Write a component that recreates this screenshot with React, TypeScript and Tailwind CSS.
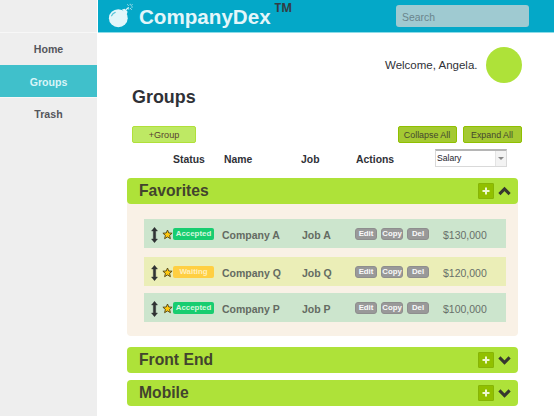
import React from 'react';

const headingText = 'text-[#2f3137] font-bold';

function Bomb() {
  return (
    <svg className="h-7 w-7 shrink-0" viewBox="0 0 28 28" fill="none">
      <ellipse cx="12.3" cy="16.2" rx="9.4" ry="9" fill="#e3f6fa" />
      <path d="M16 7.6l2.6-.8 3 3-1 3z" fill="#e3f6fa" />
      <path d="M19.8 8.4c.6-1.7 1.8-1.9 3-3" stroke="#e3f6fa" strokeWidth="1.3" />
      <path d="M5.6 13.8c.6-1.7 1.7-2.8 3.6-3.4" stroke="#5cc6da" strokeWidth="1.2" strokeLinecap="round" />
      <path d="M21.2 2.4l1.5 1.3M24.2 1.8v1.4M26.5 2.2l-1.5 1.6M25.2 5h1.6M24 6l1.7 1.8M22.7 6.2v1.5" stroke="#a5dfeb" strokeWidth="1" />
    </svg>
  );
}

function Chevron({ up = false }: { up?: boolean }) {
  return (
    <svg className="h-[10px] w-[13px]" viewBox="0 0 13 10" fill="none">
      <path d={up ? 'M1.4 8.1L6.5 3l5.1 5.1' : 'M1.4 2.4l5.1 5.1 5.1-5.1'} stroke="#36372f" strokeWidth="3.1" />
    </svg>
  );
}

function GroupBar({ title, open = false }: { title: string; open?: boolean }) {
  return (
    <div className="flex h-[26px] items-center rounded-[4px] bg-[#aee239] pl-3 pr-[7.5px]">
      <h2 className="flex-1 text-[15.7px] leading-[24px] font-bold text-[#42442e]">{title}</h2>
      <button className="mr-1 flex h-4 w-4 items-center justify-center rounded-[1px] border border-[#87b506] bg-[#91c000]">
        <svg className="h-2 w-2" viewBox="0 0 8 8">
          <path d="M4 .5v7M.5 4h7" stroke="#edf8d0" strokeWidth="2" />
        </svg>
      </button>
      <Chevron up={open} />
    </div>
  );
}

function Row({ status, name, job, salary }: { status: string; name: string; job: string; salary: string }) {
  const waiting = status === 'Waiting';
  return (
    <div className={`flex h-[29px] items-center ${waiting ? 'bg-[#ebeeb7]' : 'bg-[#cce5cd]'}`}>
      <svg className="mt-[2px] ml-[7px] h-4 w-[7px] shrink-0" viewBox="0 0 7 16">
        <path d="M3.5 .3L6.5 4H4.7v8h1.8l-3 3.7L.5 12h1.8V4H.5z" fill="#303334" stroke="#303334" strokeWidth=".4" strokeLinejoin="round" />
      </svg>
      <svg className="mt-[2px] ml-1 h-[11px] w-[11px] shrink-0" viewBox="0 0 11 11">
        <path d="M5.5 1l1.3 3 3.3.2-2.5 2.2.8 3.3-2.9-1.8-2.9 1.8.8-3.3L.9 4.2 4.2 4z" fill="#ffc90d" stroke="#4f4213" strokeWidth=".9" />
      </svg>
      <span className={`mt-px flex h-3 w-[41px] shrink-0 items-center justify-center rounded-[2px] text-[7.9px] leading-3 font-bold ${waiting ? 'bg-[#ffcf42] text-[#fff0bc]' : 'bg-[#18cd70] text-[#d5f7df]'}`}>
        {status}
      </span>
      <span className="mt-[2px] ml-2 w-20 text-[10.5px] leading-[14px] font-bold text-[#646b62]">{name}</span>
      <span className="mt-[2px] w-[53px] text-[10.5px] leading-[14px] font-bold text-[#646b62]">{job}</span>
      <span className="mt-px flex w-[88px] gap-1">
        {['Edit', 'Copy', 'Del'].map((action) => (
          <button key={action} className="h-3 w-[22px] rounded-[3px] border border-[#8e8e8e] bg-[#999999] text-center text-[7.8px] leading-[10px] font-bold text-[#fafafa]">
            {action}
          </button>
        ))}
      </span>
      <span className="mt-[2px] text-[10.5px] leading-[14px] text-[#68706a]">{salary}</span>
    </div>
  );
}

export default function App() {
  return (
    <div className="flex h-[416px] w-[554px] overflow-hidden bg-white font-['Liberation_Sans',Arial,sans-serif]">
      <aside className="w-[97px] shrink-0 bg-[#eeeeee] text-center text-[10.6px] font-bold text-[#55565c]">
        <div className="h-[33px] border-b border-[#f7f7f7]" />
        <nav>
          <a className="block h-8 leading-[33px]">Home</a>
          <a className="block h-8 bg-[#40c0cb] leading-[35px] text-[#d9f5f8]">Groups</a>
          <a className="block h-8 border-t border-[#f7f7f7] leading-[33px]">Trash</a>
        </nav>
      </aside>
      <div className="flex w-[457px] flex-col pl-px">
        <header className="flex h-[33px] shrink-0 items-center border-b border-[#8ddce8] bg-[#04a8c8] pl-2 pr-[25px]">
          <Bomb />
          <div className="ml-[5px] flex flex-1 items-start">
            <h1 className="text-[20.6px] leading-[35px] font-bold text-[#e3f6fa]">CompanyDex</h1>
            <span className="ml-[4px] font-['Open_Sans',sans-serif] text-[11.5px] leading-[18px] font-bold text-[#343b43]">TM</span>
          </div>
          <input
            className="h-[22px] w-[133px] rounded-[3px] bg-[#9fcad1] px-1.5 pt-[2px] text-[10.4px] text-[#6a858c] placeholder:text-[#6a858c]"
            placeholder="Search"
          />
        </header>
        <main className="pl-[29px] pr-9">
          <div className="mt-[14px] flex h-9 items-center justify-end">
            <span className="text-[11.5px] leading-[14px] text-[#2f3137]">Welcome, Angela.</span>
            <span className="-mr-[3.5px] ml-2 h-9 w-9 rounded-full bg-[#aee239]" />
          </div>
          <h2 className={`${headingText} mt-1 ml-[5px] text-[17.9px] leading-[20px]`}>Groups</h2>
          <div className="mt-[19px] ml-[5px] flex h-[17px] items-center text-[9.1px] text-[#45472f]">
            <button className="h-[17px] w-16 rounded-[2px] border border-[#b0e039] bg-[#bee964] pt-px leading-[15px] text-[#593f30]">+Group</button>
            <button className="ml-auto h-[17px] w-[59px] rounded-[2px] border border-[#8fc000] bg-[#a4c932] pt-px text-[8.9px] leading-[15px]">Collapse All</button>
            <button className="-mr-[3.5px] ml-[6px] h-[17px] w-[59px] rounded-[2px] border border-[#8fc000] bg-[#a4c932] pt-px text-[8.9px] leading-[15px]">Expand All</button>
          </div>
          <div className={`${headingText} mt-[6px] flex h-[18px] items-center pl-[46px] text-[10.4px]`}>
            <span className="mt-[4px] w-[51px]">Status</span>
            <span className="mt-[4px] w-[77px]">Name</span>
            <span className="mt-[4px] w-[55px]">Job</span>
            <span className="mt-[4px] w-[79px]">Actions</span>
            <span className="flex h-[18px] w-[72px] items-center border border-[#d9d9d9] border-t-2 border-t-[#b5b5b5] bg-white pl-px text-[8.6px] font-normal text-[#25252d]">
              <span className="flex-1">Salary</span>
              <span className="flex h-[15px] w-[11px] items-center justify-center border-l border-[#e4e4e4] bg-[#f3f3f3]">
                <span className="border-x-[3px] border-t-[3px] border-x-transparent border-t-[#888888]" />
              </span>
            </span>
          </div>
          <section className="mt-[11px] h-[158px] rounded-[4px] bg-[#f9f1e6]">
            <GroupBar title="Favorites" open />
            <div className="mt-[15px] ml-[17px] w-[362px]">
              <Row status="Accepted" name="Company A" job="Job A" salary="$130,000" />
              <div className="h-[9px]" />
              <Row status="Waiting" name="Company Q" job="Job Q" salary="$120,000" />
              <div className="h-[7px]" />
              <Row status="Accepted" name="Company P" job="Job P" salary="$100,000" />
            </div>
          </section>
          <section className="mt-[11px]"><GroupBar title="Front End" /></section>
          <section className="mt-[7px]"><GroupBar title="Mobile" /></section>
        </main>
      </div>
    </div>
  );
}
